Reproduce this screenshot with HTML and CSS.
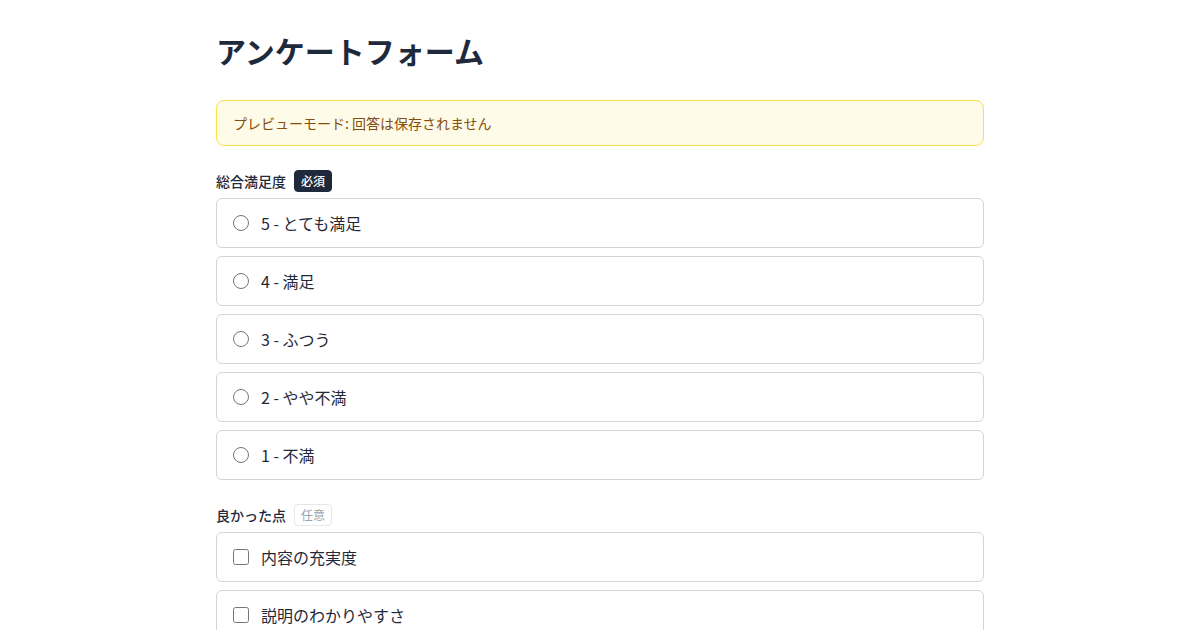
FILE: index.html
```html
<!DOCTYPE html>
<html lang="ja">
<head>
<meta charset="utf-8">
<title>アンケートフォーム</title>
<link rel="stylesheet" href="styles.css">
</head>
<body>
<main class="page">
  <h1 class="title">アンケートフォーム</h1>
  <div class="notice">プレビューモード: 回答は保存されません</div>

  <section class="group">
    <div class="label-row">
      <span class="label">総合満足度</span>
      <span class="badge badge-required">必須</span>
    </div>
    <div class="options">
      <label class="option"><input type="radio" name="sat" class="control"><span>5 - とても満足</span></label>
      <label class="option"><input type="radio" name="sat" class="control"><span>4 - 満足</span></label>
      <label class="option"><input type="radio" name="sat" class="control"><span>3 - ふつう</span></label>
      <label class="option"><input type="radio" name="sat" class="control"><span>2 - やや不満</span></label>
      <label class="option"><input type="radio" name="sat" class="control"><span>1 - 不満</span></label>
    </div>
  </section>

  <section class="group">
    <div class="label-row">
      <span class="label">良かった点</span>
      <span class="badge badge-optional">任意</span>
    </div>
    <div class="options">
      <label class="option"><input type="checkbox" class="control"><span>内容の充実度</span></label>
      <label class="option"><input type="checkbox" class="control"><span>説明のわかりやすさ</span></label>
    </div>
  </section>
</main>
</body>
</html>
```

FILE: styles.css
```css
* { box-sizing: border-box; }
html, body { margin: 0; padding: 0; background: #ffffff; }
body {
  font-family: "Noto Sans CJK JP", "Noto Sans", sans-serif;
  color: #1f2937;
}
.page {
  width: 768px;
  margin: 0 auto;
  padding-top: 31px;
}
.title {
  margin: 0 0 31px;
  font-size: 30px;
  line-height: 38px;
  font-weight: 700;
  color: #1e293b;
}
.notice {
  background: #fefce8;
  border: 1px solid #fde047;
  border-radius: 8px;
  padding: 12px 16px;
  font-size: 14px;
  line-height: 20px;
  color: #854d0e;
}
.group { margin-top: 24px; }
.label-row {
  display: flex;
  align-items: center;
  gap: 8px;
  margin-bottom: 6px;
}
.label {
  font-size: 14px;
  font-weight: 500;
  color: #1e293b;
}
.badge {
  font-size: 12px;
  line-height: 16px;
  padding: 2px 6px;
  border-radius: 4px;
  border: 1px solid transparent;
}
.badge-required { background: #1e293b; color: #ffffff; border-color: #1e293b; font-weight: 500; }
.badge-optional { background: #ffffff; color: #9ca3af; border-color: #e5e7eb; }
.options {
  display: flex;
  flex-direction: column;
  gap: 8px;
}
.option {
  display: flex;
  align-items: center;
  gap: 12px;
  height: 50px;
  padding: 0 16px;
  border: 1px solid #d1d5db;
  border-radius: 6px;
  font-size: 16px;
  color: #1f2937;
}
.control {
  width: 16px;
  height: 16px;
  margin: 0;
  flex: none;
}
```
